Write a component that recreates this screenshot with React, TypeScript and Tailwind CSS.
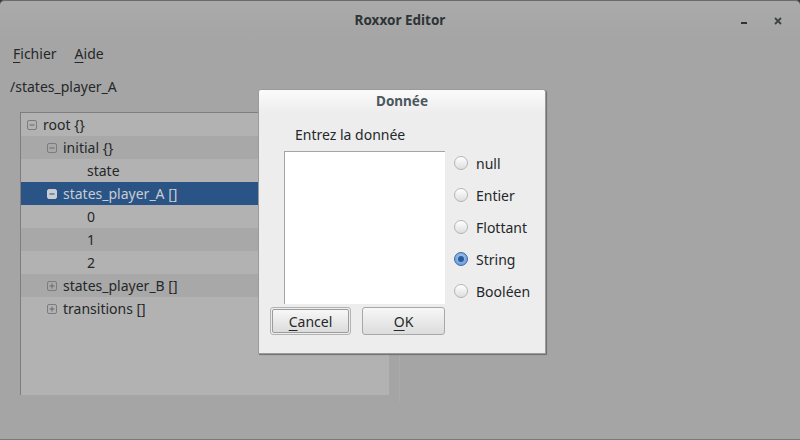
import React from 'react';

type Row = {
  label: string;
  depth: number;
  expander?: 'minus' | 'plus';
  selected?: boolean;
};

const rows: Row[] = [
  { label: 'root {}', depth: 0, expander: 'minus' },
  { label: 'initial {}', depth: 1, expander: 'minus' },
  { label: 'state', depth: 2 },
  { label: 'states_player_A []', depth: 1, expander: 'minus', selected: true },
  { label: '0', depth: 2 },
  { label: '1', depth: 2 },
  { label: '2', depth: 2 },
  { label: 'states_player_B []', depth: 1, expander: 'plus' },
  { label: 'transitions []', depth: 1, expander: 'plus' },
];

const radios = ['null', 'Entier', 'Flottant', 'String', 'Booléen'];

function Expander({ kind, selected }: { kind: 'minus' | 'plus'; selected?: boolean }) {
  return (
    <svg width="10" height="10" viewBox="0 0 10 10" className="shrink-0">
      <rect
        x="0.5"
        y="0.5"
        width="9"
        height="9"
        rx="1.5"
        fill={selected ? '#c9ccd0' : 'none'}
        stroke={selected ? '#c9ccd0' : '#7c7c7c'}
      />
      <line x1="2.5" y1="5" x2="7.5" y2="5" stroke={selected ? '#2a5485' : '#6a6a6a'} strokeWidth="1" />
      {kind === 'plus' && <line x1="5" y1="2.5" x2="5" y2="7.5" stroke="#6a6a6a" strokeWidth="1" />}
    </svg>
  );
}

function Radio({ checked }: { checked?: boolean }) {
  if (checked) {
    return (
      <span className="w-[14px] h-[14px] rounded-full border border-[#3c6aa3] bg-[radial-gradient(circle_at_50%_40%,#a9cbf3,#5a8fd3)] flex items-center justify-center shrink-0">
        <span className="w-[6px] h-[6px] rounded-full bg-[#2a5b98]" />
      </span>
    );
  }
  return (
    <span className="w-[14px] h-[14px] rounded-full border border-[#b4b4b4] bg-gradient-to-b from-[#ffffff] to-[#dedede] shrink-0" />
  );
}

export default function App() {
  return (
    <div className="w-[800px] h-[440px] bg-[#3a3a3a] overflow-hidden" style={{ fontFamily: '"Noto Sans", "Open Sans", sans-serif' }}>
      <div className="relative w-[800px] h-[440px] bg-[#a5a5a5] rounded-t-[5px] border-b border-[#7a7a7a] text-[14px] text-[#252829]">
        {/* title bar */}
        <div className="relative h-[38px] flex items-center justify-center bg-gradient-to-b from-[#aaaaaa] to-[#a5a5a5] rounded-t-[5px] border-t border-[#6a6a6a]">
          <span className="font-bold text-[13.5px] text-[#2e3436] mt-[1px]">Roxxor Editor</span>
          <span className="absolute left-[741px] top-[21px] w-[6px] h-[2px] bg-[#2e3436]" />
          <svg className="absolute left-[774px] top-[16px]" width="8" height="8" viewBox="0 0 8 8">
            <path d="M1 1 L7 7 M7 1 L1 7" stroke="#3a4446" strokeWidth="1.8" />
          </svg>
        </div>

        {/* menu */}
        <div className="h-[30px] flex items-center gap-[18px] pl-[13px]">
          <span>
            <span className="underline decoration-1 underline-offset-[3px]">F</span>ichier
          </span>
          <span>
            <span className="underline decoration-1 underline-offset-[3px]">A</span>ide
          </span>
        </div>

        {/* path */}
        <div className="h-[36px] flex items-center pl-[10px]">/states_player_A</div>

        {/* tree */}
        <div className="mt-[8px] flex">
          <div className="ml-[20px] w-[369px] h-[283px] bg-[#b2b2b2] border-l border-t border-[#7e7e7e]">
            {rows.map((r, i) => (
              <div
                key={r.label}
                className={`h-[23px] flex items-center ${
                  r.selected ? 'bg-[#2a5485] text-[#c9ccd0]' : i % 2 === 1 ? 'bg-[#a8a8a8]' : ''
                }`}
                style={{ paddingLeft: 6 + r.depth * 20 }}
              >
                <span className="w-[16px] flex items-center">
                  {r.expander && <Expander kind={r.expander} selected={r.selected} />}
                </span>
                <span className={r.expander || r.depth < 2 ? '' : 'ml-[4px]'}>{r.label}</span>
              </div>
            ))}
          </div>
          <div className="ml-[10px] h-[290px] w-[2px] border-l border-dotted border-[#b0b0b0]" />
        </div>

        {/* dialog */}
        <div className="absolute left-[258px] top-[89px] w-[288px] h-[265px] bg-[#ededed] border border-[#9a9a9a] shadow-[1px_1px_1px_#6e6e6e] rounded-t-[3px]">
          <div className="h-[23px] flex items-center justify-center bg-gradient-to-b from-[#fbfbfb] to-[#ededed] rounded-t-[3px]">
            <span className="font-bold text-[13.5px] text-[#4b585d]">Donnée</span>
          </div>
          <div className="mt-[13px] pl-[36px] h-[18px] leading-[18px]">Entrez la donnée</div>
          <div className="mt-[3px] flex items-start pl-[25px]">
            <div className="mt-[4px] w-[161px] h-[153px] bg-white border-l border-t border-[#a4a4a4]" />
            <div className="ml-[9px] flex flex-col">
              {radios.map((r) => (
                <div key={r} className="h-[32px] flex items-center gap-[8px]">
                  <Radio checked={r === 'String'} />
                  <span>{r}</span>
                </div>
              ))}
            </div>
          </div>
          <div className="mt-[0px] pl-[11px] flex gap-[11px]">
            <div className="w-[81px] h-[28px] rounded-[3px] border border-[#b3b3b3] p-[1px]">
              <div className="w-full h-full rounded-[2px] border border-[#9c9c9c] bg-gradient-to-b from-[#f7f7f7] to-[#dcdcdc] flex items-center justify-center">
                <span>
                  <span className="underline decoration-1 underline-offset-[3px]">C</span>ancel
                </span>
              </div>
            </div>
            <div className="w-[83px] h-[28px] rounded-[3px] border border-[#a8a8a8] bg-gradient-to-b from-[#f7f7f7] to-[#dcdcdc] flex items-center justify-center">
              <span>
                <span className="underline decoration-1 underline-offset-[3px]">O</span>K
              </span>
            </div>
          </div>
        </div>
      </div>
    </div>
  );
}
